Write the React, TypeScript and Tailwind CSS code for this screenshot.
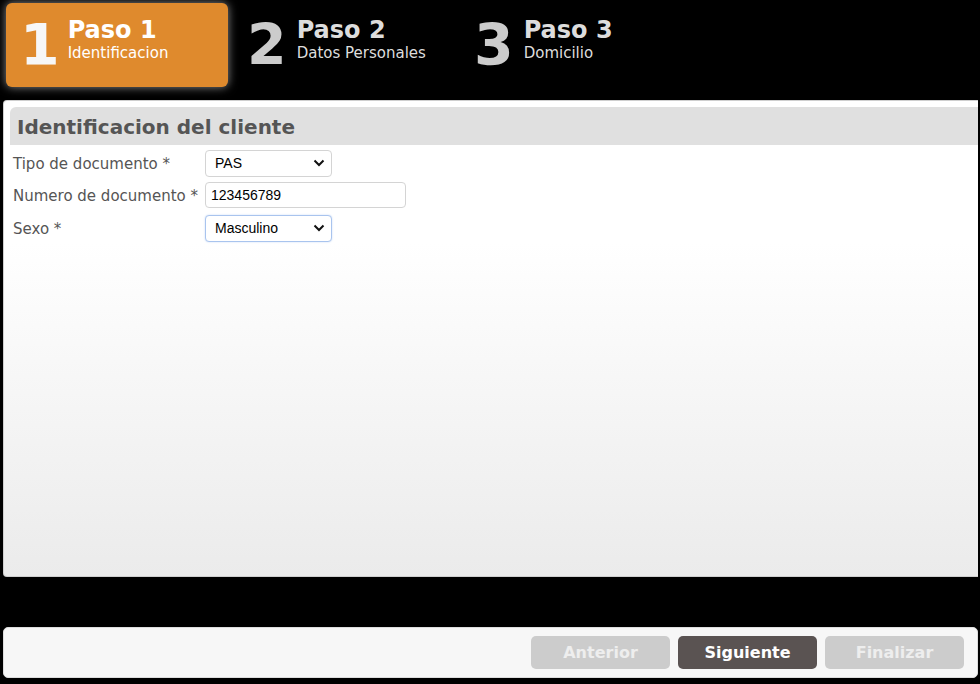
const steps = [
  { n: '1', title: 'Paso 1', sub: 'Identificacion', active: true },
  { n: '2', title: 'Paso 2', sub: 'Datos Personales', active: false },
  { n: '3', title: 'Paso 3', sub: 'Domicilio', active: false },
];

const Chevron = () => (
  <svg width="12" height="8" viewBox="0 0 12 8" className="absolute right-[6px] top-1/2 -translate-y-1/2">
    <path d="M1.5 1.5 L6 6 L10.5 1.5" fill="none" stroke="#111" strokeWidth="2" />
  </svg>
);

const Select = ({ value, focus }: { value: string; focus?: boolean }) => (
  <div
    className={`relative w-[127px] h-[27px] rounded-[4px] bg-white border flex items-center pl-[9px] text-[14px] text-black ${
      focus ? 'border-[#a9c4ee] shadow-[0_0_2px_#c7d9f5]' : 'border-[#d4d4d4]'
    }`}
    style={{ fontFamily: '"Liberation Sans", Arial, sans-serif' }}
  >
    {value}
    <Chevron />
  </div>
);

export default function App() {
  return (
    <div className="w-[980px] h-[684px] bg-black overflow-hidden" style={{ fontFamily: '"DejaVu Sans", Verdana, sans-serif' }}>
      <div className="flex h-[100px] pl-[6px] pt-[3px]">
        {steps.map((s) => (
          <div
            key={s.n}
            className={`h-[84px] flex items-start rounded-[6px] ${
              s.active
                ? 'w-[222px] bg-[#df8a2d] shadow-[0_0_10px_rgba(255,255,255,0.55)] mr-[19px] pl-[14px]'
                : s.n === '2'
                  ? 'w-[227px]'
                  : 'w-[200px]'
            }`}
          >
            <span className={`text-[57px] font-bold leading-none mt-[14px] ${s.active ? 'text-[#f7f7f7]' : 'text-[#cccccc]'}`}>{s.n}</span>
            <div className={`mt-[12px] flex flex-col ${s.active ? 'ml-[8px]' : 'ml-[10px]'}`}>
              <span className={`text-[24px] font-bold leading-[30px] ${s.active ? 'text-white' : 'text-[#dddddd]'}`}>{s.title}</span>
              <span className={`text-[15px] leading-[18px] -mt-[1px] ${s.active ? 'text-white' : 'text-[#dddddd]'}`}>{s.sub}</span>
            </div>
          </div>
        ))}
      </div>

      <div className="ml-[3px] w-[975px] h-[477px] rounded-l-[4px] border border-r-0 border-[#cfcfcf] bg-gradient-to-b from-white from-30% to-[#ebebeb] pt-[6px] pl-[6px]">
        <div className="h-[38px] bg-[#e0e0e0] rounded-tl-[6px] flex items-center pl-[7px] pt-[2px]">
          <span className="text-[20px] font-bold text-[#555555]">Identificacion del cliente</span>
        </div>
        <div className="flex flex-col gap-[5px] pt-[4px] pl-[3px] text-[15px] text-[#555555]">
          <div className="flex items-center h-[28px]">
            <span className="w-[192px] pt-[2px]">Tipo de documento *</span>
            <Select value="PAS" />
          </div>
          <div className="flex items-center h-[26px]">
            <span className="w-[192px] pt-[2px]">Numero de documento *</span>
            <div
              className="w-[201px] h-[26px] rounded-[4px] bg-white border border-[#d4d4d4] flex items-center pl-[5px] text-[14px] text-black"
              style={{ fontFamily: '"Liberation Sans", Arial, sans-serif' }}
            >
              123456789
            </div>
          </div>
          <div className="flex items-center h-[28px] mt-[1px]">
            <span className="w-[192px] pt-[2px]">Sexo *</span>
            <Select value="Masculino" focus />
          </div>
        </div>
      </div>

      <div className="ml-[3px] mt-[50px] w-[975px] h-[51px] rounded-[5px] bg-[#f7f7f7] border border-[#dddddd] flex items-center justify-end pr-[13px] gap-[8px]">
        <button className="w-[139px] h-[33px] rounded-[5px] bg-[#cccccc] text-[#eeeeee] text-[16px] font-bold">Anterior</button>
        <button className="w-[139px] h-[33px] rounded-[5px] bg-[#5a5352] text-white text-[16px] font-bold">Siguiente</button>
        <button className="w-[139px] h-[33px] rounded-[5px] bg-[#cccccc] text-[#eeeeee] text-[16px] font-bold">Finalizar</button>
      </div>
    </div>
  );
}
